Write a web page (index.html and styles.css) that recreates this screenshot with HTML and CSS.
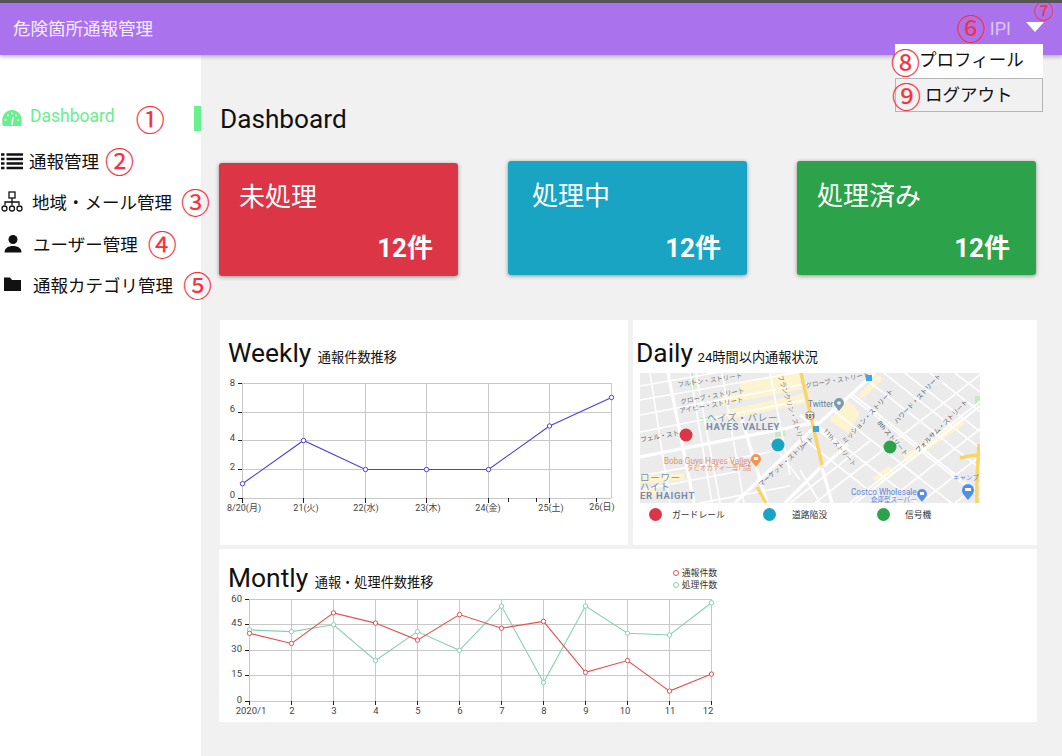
FILE: index.html

```html
<!DOCTYPE html>
<html lang="ja">
<head>
    <meta charset="UTF-8">
    <title>危険箇所通報管理</title>
    <link rel="stylesheet" href="styles.css">
</head>
<body>

<header class="topbar">
    <div class="brand">危険箇所通報管理</div>
    <div class="user">
        <span class="mark mark-big">⑥</span>
        <span class="user-name">IPI</span>
        <span class="caret"></span>
    </div>
    <span class="mark mark-small mark-seven">⑦</span>
    <div class="user-menu">
        <div class="user-menu-item"><span class="mark mark-big">⑧</span><span class="pull-one">プロフィール</span></div>
        <div class="user-menu-item bordered"><span class="mark mark-big">⑨</span><span class="pull-two">ログアウト</span></div>
    </div>
</header>

<div class="layout">

    <nav class="sidebar">
        <a class="nav-item active">
            <svg class="nav-icon" width="22" height="18" viewBox="0 0 22 18">
                <path d="M2 17C-1 7 5 1 11 1s12 6 9 16z" fill="#69ef8d"/>
                <path d="M11 16l1-8" stroke="#fff" stroke-width="1.6"/>
                <g fill="#fff"><circle cx="4.5" cy="11" r="1"/><circle cx="7" cy="6.5" r="1"/><circle cx="11" cy="4.5" r="1"/><circle cx="15" cy="6.5" r="1"/><circle cx="17.5" cy="11" r="1"/></g>
            </svg>
            <span class="nav-label dash-label">Dashboard</span>
            <span class="mark mark-big mark-one">①</span>
        </a>
        <a class="nav-item">
            <svg class="nav-icon" width="22" height="18" viewBox="0 0 22 18">
                <path d="M0 2.5h3.5M5.5 2.5H22M0 7h3.5M5.5 7H22M0 11.5h3.5M5.5 11.5H22M0 16h3.5M5.5 16H22" stroke="#111" stroke-width="2.6"/>
            </svg>
            <span class="nav-label tight">通報管理</span>
            <span class="mark mark-big mark-two">②</span>
        </a>
        <a class="nav-item">
            <svg class="nav-icon" width="22" height="22" viewBox="0 0 22 22" fill="none" stroke="#111" stroke-width="1.3">
                <rect x="8" y="1" width="6" height="6"/>
                <path d="M11 7v7M4 14v-3h14v3"/>
                <circle cx="3.5" cy="17.5" r="2.5"/><circle cx="11" cy="17.5" r="2.5"/><circle cx="18.5" cy="17.5" r="2.5"/>
            </svg>
            <span class="nav-label">地域・メール管理</span>
            <span class="mark mark-big mark-three">③</span>
        </a>
        <a class="nav-item">
            <svg class="nav-icon" width="22" height="20" viewBox="0 0 22 20" fill="#111">
                <circle cx="12" cy="5.5" r="4.5"/>
                <path d="M3.5 18.5c0-4.5 4-6.5 8.500-6.500s8.500 2 8.500 6.500z"/>
            </svg>
            <span class="nav-label wide">ユーザー管理</span>
            <span class="mark mark-big mark-four">④</span>
        </a>
        <a class="nav-item">
            <svg class="nav-icon" width="22" height="16" viewBox="0 0 22 16" fill="#111">
                <path d="M3 1.5h6l2 2.5h9v11H3z"/>
            </svg>
            <span class="nav-label wide">通報カテゴリ管理</span>
            <span class="mark mark-big mark-five">⑤</span>
        </a>
    </nav>

    <main class="content">
        <h1 class="page-title">Dashboard</h1>

        <section class="cards">
            <div class="card card-red">
                <div class="card-title">未処理</div>
                <div class="card-count">12件</div>
            </div>
            <div class="card card-blue">
                <div class="card-title">処理中</div>
                <div class="card-count">12件</div>
            </div>
            <div class="card card-green">
                <div class="card-title">処理済み</div>
                <div class="card-count">12件</div>
            </div>
        </section>

        <section class="panels">
            <div class="panel panel-weekly">
                <h2 class="panel-title">Weekly <small>通報件数推移</small></h2>
                <svg class="chart" width="408" height="145" viewBox="220 375 408 145">
                    <defs>
                        <marker id="dot-blue" markerUnits="userSpaceOnUse" markerWidth="7" markerHeight="7" refX="3.5" refY="3.5"><circle cx="3.5" cy="3.5" r="2.2" fill="#fff" stroke="#4f3fd8"/></marker>
                    </defs>
                    <path class="grid" d="M242 383.5H611.5M242 412.5H611.5M242 440.5H611.5M242 469.5H611.5M242 498.5H611.5M242.5 383V498M303.5 383V498M365.5 383V498M426.5 383V498M488.5 383V498M549.5 383V498M611.5 383V498"/>
                    <path class="ticks" d="M238 383.5h4M238 412.5h4M238 440.5h4M238 469.5h4M238 498.5h4M242.5 498v5M303.5 498v5M365.5 498v5M426.5 498v5M488.5 498v5M508.5 498v4M536.5 498v4M549.5 498v5M596.5 498v4"/>
                    <polyline class="line" stroke="#4f3fd8" marker-start="url(#dot-blue)" marker-mid="url(#dot-blue)" marker-end="url(#dot-blue)" points="242.5,483.7 303.5,440.5 365.5,469.5 426.5,469.5 488.5,469.5 549.5,426 611.5,397.5"/>
                    <g class="axis-y">
                        <text x="235" y="386">8</text><text x="235" y="412">6</text><text x="235" y="441">4</text><text x="235" y="470">2</text><text x="235" y="498">0</text>
                    </g>
                    <g class="axis-x">
                        <text x="244" y="511">8/20(月)</text><text x="306" y="511">21(火)</text><text x="366" y="511">22(水)</text><text x="428" y="511">23(木)</text><text x="488" y="511">24(金)</text><text x="551" y="511">25(土)</text><text x="602" y="510">26(日)</text>
                    </g>
                </svg>
            </div>

            <div class="panel panel-daily">
                <h2 class="panel-title">Daily <small>24時間以内通報状況</small></h2>
                <svg class="map" width="340" height="130" viewBox="640 373 340 130">
                    <rect x="640" y="373" width="340" height="130" fill="#ebebec"/>
                    <g fill="#fdf3cf">
                        <path d="M740 383l60-12 2 9-62 12zM722 396l78-16 2 9-80 16zM726 410l78-16 2 9-78 16zM770 372l30-2v8l-28 3zM830 421l16-22 14 14-12 20zM873 478l16-12 6 6-18 12zM903 455l58-36 4 5-58 40zM640 477l44-4 1 7-45 4zM640 490l16-1v7h-16z"/>
                        <path d="M858 395l20-20 5 4-20 20zM830 418l22-14 3 3-20 16z"/>
                    </g>
                    <g fill="#c8e8c4">
                        <path d="M689 373h4l2 18h-4zM700 418l10-2 1 4-10 2zM775 432l10-1 1 5-11 1zM975 396h5v8h-5z"/>
                    </g>
                    <g fill="none" stroke="#fff" stroke-width="1.6">
                        <path d="M650 373l20 130M696 373l24 130M722 373l22 130M770 373l20 102M690 373l22 130"/>
                        <path d="M640 386l160-28M640 400l160-28M640 415l170-32M640 432l165-32M640 476l130-24M640 490l100-19M700 503l90-17"/>
                        <path d="M884 373l120 94M905 373l100 78M930 373l80 62M955 373l50 38M867 380l160 125M850 396l140 109M834 411l120 94M818 426l100 78M805 440l80 63"/>
                        <path d="M815 503l175-136M850 503l160-125M885 503l145-113M920 503l90-70M955 503l60-47M790 503l80-62M770 440l30 40M800 470l20 33"/>
                    </g>
                    <g fill="none" stroke="#fff" stroke-width="3.2">
                        <path d="M668 373l26 130M742 420l25 83M640 457l178-35"/>
                        <path d="M735 503l82-78 58-52M820 468l-35 35M822 468l10 35M824 466l24-22"/>
                        <path d="M800 415l45 35"/>
                    </g>
                    <g fill="none" stroke="#fff" stroke-width="2.2">
                        <path d="M851 393l120 94M855 503l125-97"/>
                    </g>
                    <g fill="none" stroke="#f9d567" stroke-width="3.4">
                        <path d="M801 373l21 92M757 487l9 16M979 444c-2 30-3 40-2 59M980 455c-8 0-16 2-20 3"/>
                    </g>
                    <text class="map-label" x="678" y="387" transform="rotate(-8 678 387)">フルトン・ストリート</text>
                    <text class="map-label" x="681" y="404" transform="rotate(-10 681 404)">グローブ・ストリート</text>
                    <text class="map-label" x="680" y="413" transform="rotate(-10 680 413)">アイビー・ストリート</text>
                    <text class="map-label dark" x="641" y="442" transform="rotate(-10 641 442)">フェル・スト</text>
                    <text class="map-label" x="806" y="388" transform="rotate(-10 806 388)">グローブ・ストリート</text>
                    <text class="map-label" x="778" y="376" transform="rotate(72 778 376)">フランクリン・ストリート</text>
                    <text class="map-label dark" x="761" y="487" transform="rotate(-42 761 487)">マーケット・ストリート</text>
                    <text class="map-label" x="823" y="431" transform="rotate(50 823 431)">11th ストリート</text>
                    <text class="map-label dark" x="845" y="444" transform="rotate(-47 845 444)">ミッション・ストリート</text>
                    <text class="map-label dark" x="877" y="423" transform="rotate(50 877 423)">8th ストリート</text>
                    <text class="map-label dark" x="897" y="424" transform="rotate(-47 897 424)">ハワード・ストリート</text>
                    <text class="map-label dark" x="918" y="453" transform="rotate(-45 918 453)">フォルサム・ストリート</text>
                    <text class="map-area" x="707" y="421">ヘイズ・バレー</text>
                    <text class="map-area bold" x="706" y="430">HAYES VALLEY</text>
                    <text class="map-area" x="640" y="481">ローワー</text>
                    <text class="map-area" x="640" y="490">ハイト</text>
                    <text class="map-area bold" x="640" y="499">ER HAIGHT</text>
                    <text class="map-poi twitter" x="808" y="407">Twitter</text>
                    <path d="M839 411c-4-5-5-6-5-8a5 5 0 0 1 10 0c0 2-1 3-5 8z" fill="#7b9bb0"/><circle cx="839" cy="403" r="1.8" fill="#fff"/>
                    <text class="map-poi boba" x="664" y="464">Boba Guys Hayes Valley</text>
                    <text class="map-small boba" x="687" y="470">タピオカティー専門店</text>
                    <path d="M756 467c-4-5-5-6-5-8a5 5 0 0 1 10 0c0 2-1 3-5 8z" fill="#f2954f"/><rect x="754" y="457" width="4" height="3" fill="#fff"/>
                    <text class="map-poi costco" x="851" y="495">Costco Wholesale</text>
                    <text class="map-small costco" x="871" y="502">倉庫型スーパー</text>
                    <text class="map-small costco" x="953" y="480">キャンプ</text>
                    <path d="M922 502c-4-5-5-6-5-8a5 5 0 0 1 10 0c0 2-1 3-5 8z" fill="#5a8fe8"/><rect x="920" y="492" width="4" height="3" fill="#fff"/>
                    <path d="M968 500c-5-6-6-7-6-10a6 6 0 0 1 12 0c0 3-1 4-6 10z" fill="#4f8fe8"/><rect x="965" y="488" width="6" height="3" fill="#fff"/>
                    <rect x="806" y="412" width="8" height="7" rx="2" fill="#fff" stroke="#555" stroke-width=".6"/>
                    <text x="810" y="418" class="shield">101</text>
                    <rect x="866" y="375" width="6" height="6" fill="#3aa6e8"/><rect x="813" y="426" width="6" height="6" fill="#3aa6e8"/>
                    <circle cx="686" cy="435" r="6.5" fill="#dc3545"/>
                    <circle cx="778" cy="445" r="6.5" fill="#18a4c2"/>
                    <circle cx="890" cy="447" r="6.5" fill="#2ca34a"/>
                </svg>
                <div class="map-legend">
                    <div class="legend-item"><span class="legend-dot dot-red"></span>ガードレール</div>
                    <div class="legend-item"><span class="legend-dot dot-blue"></span>道路陥没</div>
                    <div class="legend-item"><span class="legend-dot dot-green"></span>信号機</div>
                </div>
            </div>

            <div class="panel panel-monthly">
                <div class="panel-head">
                    <h2 class="panel-title">Montly <small>通報・処理件数推移</small></h2>
                    <div class="chart-legend">
                        <div class="chart-legend-item"><span class="ring ring-red"></span>通報件数</div>
                        <div class="chart-legend-item"><span class="ring ring-mint"></span>処理件数</div>
                    </div>
                </div>
                <svg class="chart" width="510" height="126" viewBox="219 594 510 126">
                    <defs>
                        <marker id="dot-red" markerUnits="userSpaceOnUse" markerWidth="7" markerHeight="7" refX="3.5" refY="3.5"><circle cx="3.5" cy="3.5" r="2.2" fill="#fff" stroke="#e0524f"/></marker>
                        <marker id="dot-mint" markerUnits="userSpaceOnUse" markerWidth="7" markerHeight="7" refX="3.5" refY="3.5"><circle cx="3.5" cy="3.5" r="2.2" fill="#fff" stroke="#86d3b0"/></marker>
                    </defs>
                    <path class="grid" d="M249 599.5H711.5M249 624.5H711.5M249 650.5H711.5M249 675.5H711.5M249 701.5H711.5M249.5 599V701M291.5 599V701M333.5 599V701M375.5 599V701M417.5 599V701M459.5 599V701M501.5 599V701M543.5 599V701M585.5 599V701M627.5 599V701M669.5 599V701M711.5 599V701"/>
                    <path class="ticks" d="M245 599.5h4M245 624.5h4M245 650.5h4M245 675.5h4M245 701.5h4M249.5 701v4M291.5 701v4M333.5 701v4M375.5 701v4M417.5 701v4M459.5 701v4M501.5 701v4M543.5 701v4M585.5 701v4M627.5 701v4M669.5 701v4M711.5 701v4"/>
                    <polyline class="line" stroke="#86d3b0" marker-start="url(#dot-mint)" marker-mid="url(#dot-mint)" marker-end="url(#dot-mint)" points="249.5,629.9 291.5,631.6 333.5,624.8 375.5,660.5 417.5,631.6 459.5,650.3 501.5,606.1 543.5,682.6 585.5,606.1 627.5,633.3 669.5,635 711.5,602.7"/>
                    <polyline class="line" stroke="#e0524f" marker-start="url(#dot-red)" marker-mid="url(#dot-red)" marker-end="url(#dot-red)" points="249.5,633.3 291.5,643.5 333.5,612.9 375.5,623.1 417.5,640.1 459.5,614.6 501.5,628.2 543.5,621.4 585.5,672.4 627.5,660.5 669.5,691.1 711.5,674.1"/>
                    <g class="axis-y month">
                        <text x="242" y="602">60</text><text x="242" y="626">45</text><text x="242" y="652">30</text><text x="242" y="677">15</text><text x="242" y="703">0</text>
                    </g>
                    <g class="axis-x month">
                        <text x="251" y="714">2020/1</text><text x="292" y="714">2</text><text x="334" y="714">3</text><text x="376" y="714">4</text><text x="418" y="714">5</text><text x="460" y="714">6</text><text x="502" y="714">7</text><text x="544" y="714">8</text><text x="586" y="714">9</text><text x="625" y="714">10</text><text x="670" y="714">11</text><text x="708" y="714">12</text>
                    </g>
                </svg>
            </div>
        </section>
    </main>
</div>

</body>
</html>
```

FILE: styles.css

```css
*{
    margin:0;
    padding:0;
    box-sizing:border-box;
}

html, body{
    height:100%;
}

body{
    font-family: Roboto, "Noto Sans CJK JP", sans-serif;
    background:#f1f1f1;
    color:#111;
    border-top:3px solid #555;
    overflow:hidden;
}

.topbar{
    height:52px;
    background:#ab72ee;
    box-shadow:0 2px 4px rgba(0, 0, 0, 0.25);
    display:flex;
    align-items:center;
    justify-content:space-between;
    padding:0 18px 4px 13px;
    position:relative;
    z-index:2;
}

.brand{
    color:#f6efff;
    font-size:17.5px;
}

.user{
    display:flex;
    align-items:center;
}

.user-name{
    color:#dcc6f8;
    font-size:18px;
    margin:2px 15px 0 4px;
}

.caret{
    width:0;
    height:0;
    border-left:9px solid transparent;
    border-right:9px solid transparent;
    border-top:10px solid #fff;
    margin-top:-1px;
}

.mark{
    color:#f5333f;
    line-height:1;
    font-family:"Noto Sans CJK JP", sans-serif;
    -webkit-text-stroke:0.2px #f5333f;
}

.mark-big{
    font-size:29px;
}

.mark-small{
    font-size:20px;
}

.mark-seven{
    position:absolute;
    right:8px;
    top:-2px;
}

.user-menu{
    position:absolute;
    left:895px;
    top:41px;
    width:148px;
    font-size:17.5px;
}

.user-menu-item{
    height:34px;
    background:#fff;
    display:flex;
    align-items:center;
    white-space:nowrap;
}

.user-menu-item.bordered{
    background:#f1f1f1;
    border:1px solid #b5b5b5;
}

.user-menu-item .mark{
    margin-left:-4px;
    width:28px;
}

.pull-one{
    margin-top:-6px;
}

.pull-two{
    margin:-4px 0 0 5px;
}

.layout{
    display:flex;
    height:calc(100% - 52px);
}

.sidebar{
    width:201px;
    flex:none;
    background:#fff;
    padding-top:41px;
    display:grid;
    grid-template-columns:201px;
    grid-template-rows:44px 41px 41px 43px 38px;
    align-content:start;
}

.nav-item{
    display:flex;
    align-items:center;
    padding-left:1px;
    font-size:17.5px;
    white-space:nowrap;
}

.nav-icon{
    flex:none;
}

.nav-label{
    margin-left:9px;
}

.nav-label.tight{
    margin-left:6px;
}

.nav-label.wide{
    margin-left:10px;
}

.dash-label{
    color:#69ef8d;
    margin-left:7px;
    margin-top:-4px;
}

.active::after{
    content:"";
    width:7px;
    height:25px;
    background:#69ef8d;
    margin-left:auto;
}

.mark-one{ margin-left:21px; }
.mark-two{ margin-left:6px; }
.mark-three{ margin-left:9px; }
.mark-four{ margin-left:10px; }
.mark-five{ margin-left:10px; }

.content{
    flex:1;
    padding:49px 25px 0 18px;
}

.page-title{
    font-size:26.2px;
    font-weight:400;
    line-height:30px;
    margin-left:1px;
}

.cards{
    display:flex;
    gap:50px;
    margin-top:27px;
    height:115px;
    align-items:flex-start;
}

.card{
    width:239px;
    height:114px;
    border-radius:3px;
    color:#fff;
    box-shadow:0 1px 4px rgba(0, 0, 0, 0.4);
    padding:17px 26px 0 24px;
}

.card-red{ background:#dc3545; margin-top:2px; height:113px; padding:16px 25px 0 20px; }
.card-blue{ background:#18a4c2; }
.card-green{ background:#2ca34a; padding-left:20px; }

.card-title{
    font-size:26px;
    line-height:36px;
}

.card-count{
    font-size:26px;
    font-weight:700;
    line-height:36px;
    text-align:right;
    margin-top:16px;
}

.card-red .card-count{
    margin-top:15px;
}

.panels{
    display:grid;
    grid-template-columns:409px 404px;
    grid-template-rows:225px 173px;
    gap:4px 5px;
    margin-top:44px;
}

.panel{
    background:#fff;
}

.panel-weekly{
    margin-left:1px;
}

.panel-monthly{
    grid-column:1 / 3;
    padding-top:13px;
}

.panel-title{
    font-size:26.4px;
    font-weight:400;
    line-height:32px;
    padding:17px 0 0 8px;
    white-space:nowrap;
}

.panel-title small{
    font-size:13.2px;
    line-height:1;
}

.panel-weekly .chart{
    display:block;
    margin-top:6px;
}

.panel-daily .panel-title{
    padding-left:3px;
}

.panel-daily small{
    margin-left:-2px;
}

.panel-head{
    display:flex;
    justify-content:space-between;
    width:498px;
}

.panel-monthly .panel-title{
    padding:0 0 0 9px;
}

.panel-monthly .chart{
    display:block;
}

.chart-legend{
    padding-top:5px;
    font-size:8.8px;
    line-height:12px;
    color:#333;
}

.chart-legend-item{
    display:flex;
    align-items:center;
    gap:3px;
}

.ring{
    width:6px;
    height:6px;
    flex:none;
    border-radius:50%;
    border:1px solid;
}

.ring-red{ border-color:#e0524f; }
.ring-mint{ border-color:#86d3b0; }

.chart{
    font-family:Roboto, "Noto Sans CJK JP", sans-serif;
    fill:#444;
}

.grid{
    fill:none;
    stroke:#c8c8c8;
    stroke-width:1;
}

.ticks{
    fill:none;
    stroke:#222;
    stroke-width:1;
}

.line{
    fill:none;
    stroke-width:1.1;
}

.axis-y text{
    font-size:9.5px;
    text-anchor:end;
}

.axis-x text{
    font-size:9px;
    text-anchor:middle;
}

.axis-y.month text,
.axis-x.month text{
    font-size:9.5px;
}

.map{
    display:block;
    margin:4px 0 0 7px;
    font-family:Roboto, "Noto Sans CJK JP", sans-serif;
}

.map-label{
    font-size:6.5px;
    fill:#777;
}

.map-label.dark{
    fill:#5f5f5f;
}

.map-area{
    font-size:9.5px;
    fill:#7a8ca8;
    letter-spacing:0.7px;
}

.map-area.bold{
    font-weight:700;
}

.map-poi{
    font-size:8.2px;
}

.map-small{
    font-size:6.5px;
}

.twitter{ fill:#5f7f91; }
.boba{ fill:#e0926a; }
.costco{ fill:#5f86d6; }

.shield{
    font-size:5px;
    font-weight:700;
    text-anchor:middle;
    fill:#333;
}

.map-legend{
    display:flex;
    margin:5px 0 0 16px;
}

.legend-item{
    width:114px;
    display:flex;
    align-items:center;
    font-size:8.8px;
    color:#333;
}

.legend-dot{
    width:13px;
    height:13px;
    border-radius:50%;
    margin-right:10px;
}

.dot-blue{ background:#18a4c2; margin-right:16px; }
.dot-red{ background:#dc3545; }
.dot-green{ background:#2ca34a; margin-right:15px; }
```
